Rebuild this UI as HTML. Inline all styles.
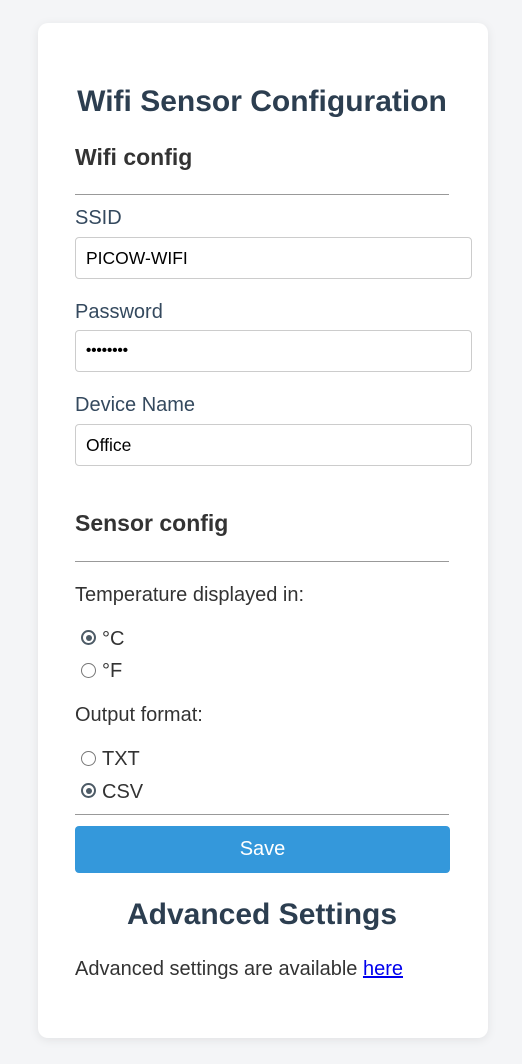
<!DOCTYPE html>
<html><head><meta charset="utf-8"><style>
*{box-sizing:border-box;margin:0;padding:0}
body{width:522px;height:1064px;background:#f4f5f7;font-family:"Liberation Sans",Arial,sans-serif;position:relative;overflow:hidden}
.card{position:absolute;left:38px;top:23px;width:450px;height:1015px;background:#fff;border-radius:10px;box-shadow:0 2px 10px rgba(0,0,0,0.08)}
.a{position:absolute;white-space:nowrap;line-height:1}
.h1{left:0;width:524px;text-align:center;font-size:30px;font-weight:bold;color:#2c3e50}
.h3{left:75px;font-size:23px;font-weight:bold;color:#333}
.hr{position:absolute;left:75px;width:374px;height:1px;background:#999}
.lbl{left:75px;font-size:20px;color:#34495e}
.txt{left:75px;font-size:20px;color:#333}
.inp{position:absolute;left:75px;width:397px;height:42px;border:1px solid #ccc;border-radius:4px;font-size:17.5px;color:#000;padding-left:10px;line-height:40px}
.r{position:absolute;left:81px;width:15px;height:15px;border:1px solid #767676;border-radius:50%;background:#fff}
.r.on{border:2px solid #4d5b66}
.r.on::after{content:"";position:absolute;left:2.5px;top:2.5px;width:6px;height:6px;border-radius:50%;background:#4d5b66}
.rl{left:102px;font-size:20px;color:#333}
.btn{position:absolute;left:75px;top:826px;width:375px;height:47px;background:#3498db;border-radius:4px;color:#fff;font-size:20px;text-align:center;line-height:47px}
a{color:#0000ee}
</style></head><body>
<div class="card"></div>
<div class="a h1" style="top:87px">Wifi Sensor Configuration</div>
<div class="a h3" style="top:146px">Wifi config</div>
<div class="hr" style="top:194px"></div>
<div class="a lbl" style="top:208px">SSID</div>
<div class="inp" style="top:237px">PICOW-WIFI</div>
<div class="a lbl" style="top:302px">Password</div>
<div class="inp" style="top:330px;font-size:15px;font-weight:bold">••••••••</div>
<div class="a lbl" style="top:395px">Device Name</div>
<div class="inp" style="top:424px">Office</div>
<div class="a h3" style="top:512px">Sensor config</div>
<div class="hr" style="top:561px"></div>
<div class="a txt" style="top:585px">Temperature displayed in:</div>
<div class="r on" style="top:630px"></div><div class="a rl" style="top:629px">°C</div>
<div class="r" style="top:663px"></div><div class="a rl" style="top:661px">°F</div>
<div class="a txt" style="top:705px">Output format:</div>
<div class="r" style="top:751px"></div><div class="a rl" style="top:749px">TXT</div>
<div class="r on" style="top:783px"></div><div class="a rl" style="top:782px">CSV</div>
<div class="hr" style="top:814px"></div>
<div class="btn">Save</div>
<div class="a h1" style="top:900px">Advanced Settings</div>
<div class="a txt" style="top:959px">Advanced settings are available <a href="#">here</a></div>
</body></html>
